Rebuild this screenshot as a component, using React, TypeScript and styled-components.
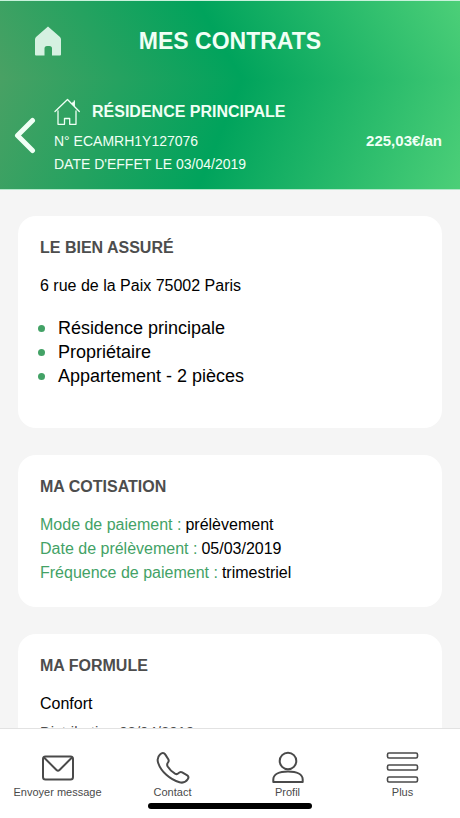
import React from "react";
import styled, { createGlobalStyle } from "styled-components";

const GlobalStyle = createGlobalStyle`
  * { box-sizing: border-box; }
  body {
    margin: 0;
    background: #f5f5f5;
    color: #000;
    font-family: "Liberation Sans", Arial, Helvetica, sans-serif;
  }
  h1, h2, p, ul, dl, dt, dd { margin: 0; padding: 0; }
  svg { display: block; flex: none; }
`;

const Screen = styled.div`
  display: flex;
  flex-direction: column;
  height: 100vh;
  overflow: hidden;
`;

const Header = styled.header`
  flex: none;
  color: #f0fff5;
  border-top: 1px solid #c9f2dc;
  border-bottom: 1px solid #b5e8cb;
`;

const TitleBar = styled.div`
  display: grid;
  grid-template-columns: 60px 1fr 60px;
  align-items: center;
  padding: 0 18px;
  height: 79px;
  background: linear-gradient(60deg, #4aa164 0%, #00a35c 48%, #4ccf78 100%);
`;

const PageTitle = styled.h1`
  font-size: 23px;
  line-height: 28px;
  text-align: center;
`;

const IconButton = styled.button`
  display: flex;
  justify-content: center;
  align-items: center;
  padding: 0;
  border: 0;
  background: none;
  color: inherit;
  cursor: pointer;
`;

const Contract = styled.section`
  display: grid;
  grid-template-columns: 50px 1fr auto;
  align-items: center;
  column-gap: 4px;
  padding: 15px 18px 13px 0;
  background: linear-gradient(112deg, #48a164 0%, #00a35c 48%, #4ccf78 100%);
`;

const ContractInfo = styled.div`
  font-size: 14px;
  line-height: 23px;
`;

const ContractName = styled.h2`
  display: flex;
  align-items: center;
  gap: 12px;
  padding-bottom: 1px;
  font-size: 16px;
  line-height: 34px;
`;

const Price = styled.strong`
  padding-top: 10px;
  font-size: 15px;
  line-height: 23px;
`;

const Content = styled.main`
  flex: 1;
  min-height: 0;
  overflow: hidden;
  display: flex;
  flex-direction: column;
  gap: 27px;
  padding: 26px 18px 0;
`;

const Card = styled.section<{ $bottom?: number }>`
  flex: none;
  padding: 22px 22px ${(p) => p.$bottom ?? 22}px;
  border-radius: 18px;
  background: #fff;
`;

const CardTitle = styled.h2`
  margin-bottom: 16px;
  color: #4d4d4d;
  font-size: 16px;
  line-height: 20px;
`;

const Text = styled.p`
  font-size: 16px;
  line-height: 24px;
`;

const Note = styled.p`
  margin-top: 4px;
  color: #4d4d4d;
  font-size: 15px;
  line-height: 24px;
`;

const Bullets = styled.ul`
  margin-top: 18px;
  list-style: none;
  font-size: 18px;
  line-height: 24px;
`;

const Bullet = styled.li`
  display: flex;
  align-items: center;
  gap: 13px;
  margin-left: -2px;

  &::before {
    content: "";
    width: 7px;
    height: 7px;
    border-radius: 50%;
    background: #43a266;
  }
`;

const Details = styled.dl`
  font-size: 16px;
  line-height: 24px;
`;

const Detail = styled.div`
  display: flex;
  gap: 4px;

  dt { color: #43a266; }
`;

const TabBar = styled.nav`
  flex: none;
  border-top: 1px solid #e2e2e2;
  background: #fff;
`;

const Tabs = styled.div`
  display: grid;
  grid-template-columns: repeat(4, 1fr);
  padding-top: 20px;
`;

const Tab = styled.button`
  display: flex;
  flex-direction: column;
  align-items: center;
  padding: 0;
  border: 0;
  background: none;
  color: #4a4a4a;
  font: 11px/14px "Liberation Sans", Arial, sans-serif;
  white-space: nowrap;
  cursor: pointer;
`;

const HomeIndicator = styled.div`
  width: 164px;
  height: 6px;
  margin: 4px auto 9px;
  border-radius: 3px;
  background: #000;
`;

const HomeIcon = () => (
  <svg width="26" height="30" viewBox="0 0 26 30" fill="#d5f1e1" aria-hidden="true">
    <path d="M13 0.500 25 11q1 1 1 2.500V28.500q0 1-1 1H17V22.500q0-2.500-2.500-2.500H12q-2.500 0-2.500 2.500V29.500H1Q0 29.500 0 28.500V13.500Q0 12 1 11Z" />
  </svg>
);

const HouseIcon = () => (
  <svg width="26" height="28" viewBox="0 0 26 28" fill="none" stroke="currentColor" strokeWidth="1.3" strokeLinejoin="round" strokeLinecap="round" aria-hidden="true">
    <path d="M1 13.500 13.500 1.500 25.300 13.500M19 6.500V4.500M20.300 2.800V8.300M4 12.800V26.300H10.500V20.500H15.700V26.300H22V12.800" />
  </svg>
);

const BackIcon = () => (
  <svg width="22" height="38" viewBox="0 0 22 38" fill="none" stroke="currentColor" strokeWidth="5" strokeLinecap="round" strokeLinejoin="round" aria-hidden="true">
    <path d="M18.500 3.500 3.500 18.500 18.500 33.500" />
  </svg>
);

const tabIcon = {
  width: 34,
  height: 36,
  viewBox: "0 0 34 36",
  fill: "none",
  stroke: "currentColor",
  strokeWidth: 2,
  strokeLinecap: "round",
  strokeLinejoin: "round",
  "aria-hidden": true,
} as const;

const MailIcon = () => (
  <svg {...tabIcon}>
    <rect x="2" y="7.500" width="30" height="23" rx="2.500" />
    <path d="M3 8.500 15.500 21q1.500 1.300 3 0L31 8.500" />
  </svg>
);

const PhoneIcon = () => (
  <svg {...tabIcon}>
    <path d="M4 5.500C6 3.500 8 3.500 9.200 5.400L12.300 10.300C13 11.500 12.800 12.500 12 13.500C10.800 15 10.700 15.800 11.700 17.500C13.700 20.700 16 23 19 24.700C20.500 25.500 21.500 25.300 22.500 24.200C23.700 22.900 25 22.700 26.200 23.400L31.300 26.400C32.800 27.400 32.800 28.600 31.700 30.300C29.800 33.200 27 34.200 23.500 33.300C14 30.700 5 22.500 2.200 14C1 10.400 1.500 7.800 4 5.500Z" />
  </svg>
);

const ProfileIcon = () => (
  <svg {...tabIcon}>
    <circle cx="17" cy="12" r="8.300" />
    <path d="M2.300 33V30.500C2.300 25.500 8 22.500 17 22.500S31.700 25.500 31.700 30.500V33Z" />
  </svg>
);

const MenuIcon = () => (
  <svg {...tabIcon} strokeWidth={1.6}>
    <rect x="1.500" y="4" width="30" height="5" rx="1.500" />
    <rect x="1.500" y="16" width="30" height="5" rx="1.500" />
    <rect x="1.500" y="28" width="30" height="5" rx="1.500" />
  </svg>
);

const insured = ["Résidence principale", "Propriétaire", "Appartement - 2 pièces"];

const payment = [
  ["Mode de paiement :", "prélèvement"],
  ["Date de prélèvement :", "05/03/2019"],
  ["Fréquence de paiement :", "trimestriel"],
];

const tabs = [
  { label: "Envoyer message", Icon: MailIcon },
  { label: "Contact", Icon: PhoneIcon },
  { label: "Profil", Icon: ProfileIcon },
  { label: "Plus", Icon: MenuIcon },
];

export default function App() {
  return (
    <Screen>
      <GlobalStyle />
      <Header>
        <TitleBar>
          <IconButton type="button" aria-label="Accueil"><HomeIcon /></IconButton>
          <PageTitle>MES CONTRATS</PageTitle>
        </TitleBar>
        <Contract>
          <IconButton type="button" aria-label="Retour"><BackIcon /></IconButton>
          <ContractInfo>
            <ContractName><HouseIcon />RÉSIDENCE PRINCIPALE</ContractName>
            <p>N° ECAMRH1Y127076</p>
            <p>DATE D'EFFET LE 03/04/2019</p>
          </ContractInfo>
          <Price>225,03€/an</Price>
        </Contract>
      </Header>

      <Content>
        <Card $bottom={40}>
          <CardTitle>LE BIEN ASSURÉ</CardTitle>
          <Text>6 rue de la Paix 75002 Paris</Text>
          <Bullets>
            {insured.map((item) => <Bullet key={item}>{item}</Bullet>)}
          </Bullets>
        </Card>
        <Card>
          <CardTitle>MA COTISATION</CardTitle>
          <Details>
            {payment.map(([label, value]) => (
              <Detail key={label}><dt>{label}</dt><dd>{value}</dd></Detail>
            ))}
          </Details>
        </Card>
        <Card>
          <CardTitle>MA FORMULE</CardTitle>
          <Text>Confort</Text>
          <Note>Distribution 03/04/2019</Note>
        </Card>
      </Content>

      <TabBar>
        <Tabs>
          {tabs.map(({ label, Icon }) => (
            <Tab key={label} type="button"><Icon />{label}</Tab>
          ))}
        </Tabs>
        <HomeIndicator />
      </TabBar>
    </Screen>
  );
}
